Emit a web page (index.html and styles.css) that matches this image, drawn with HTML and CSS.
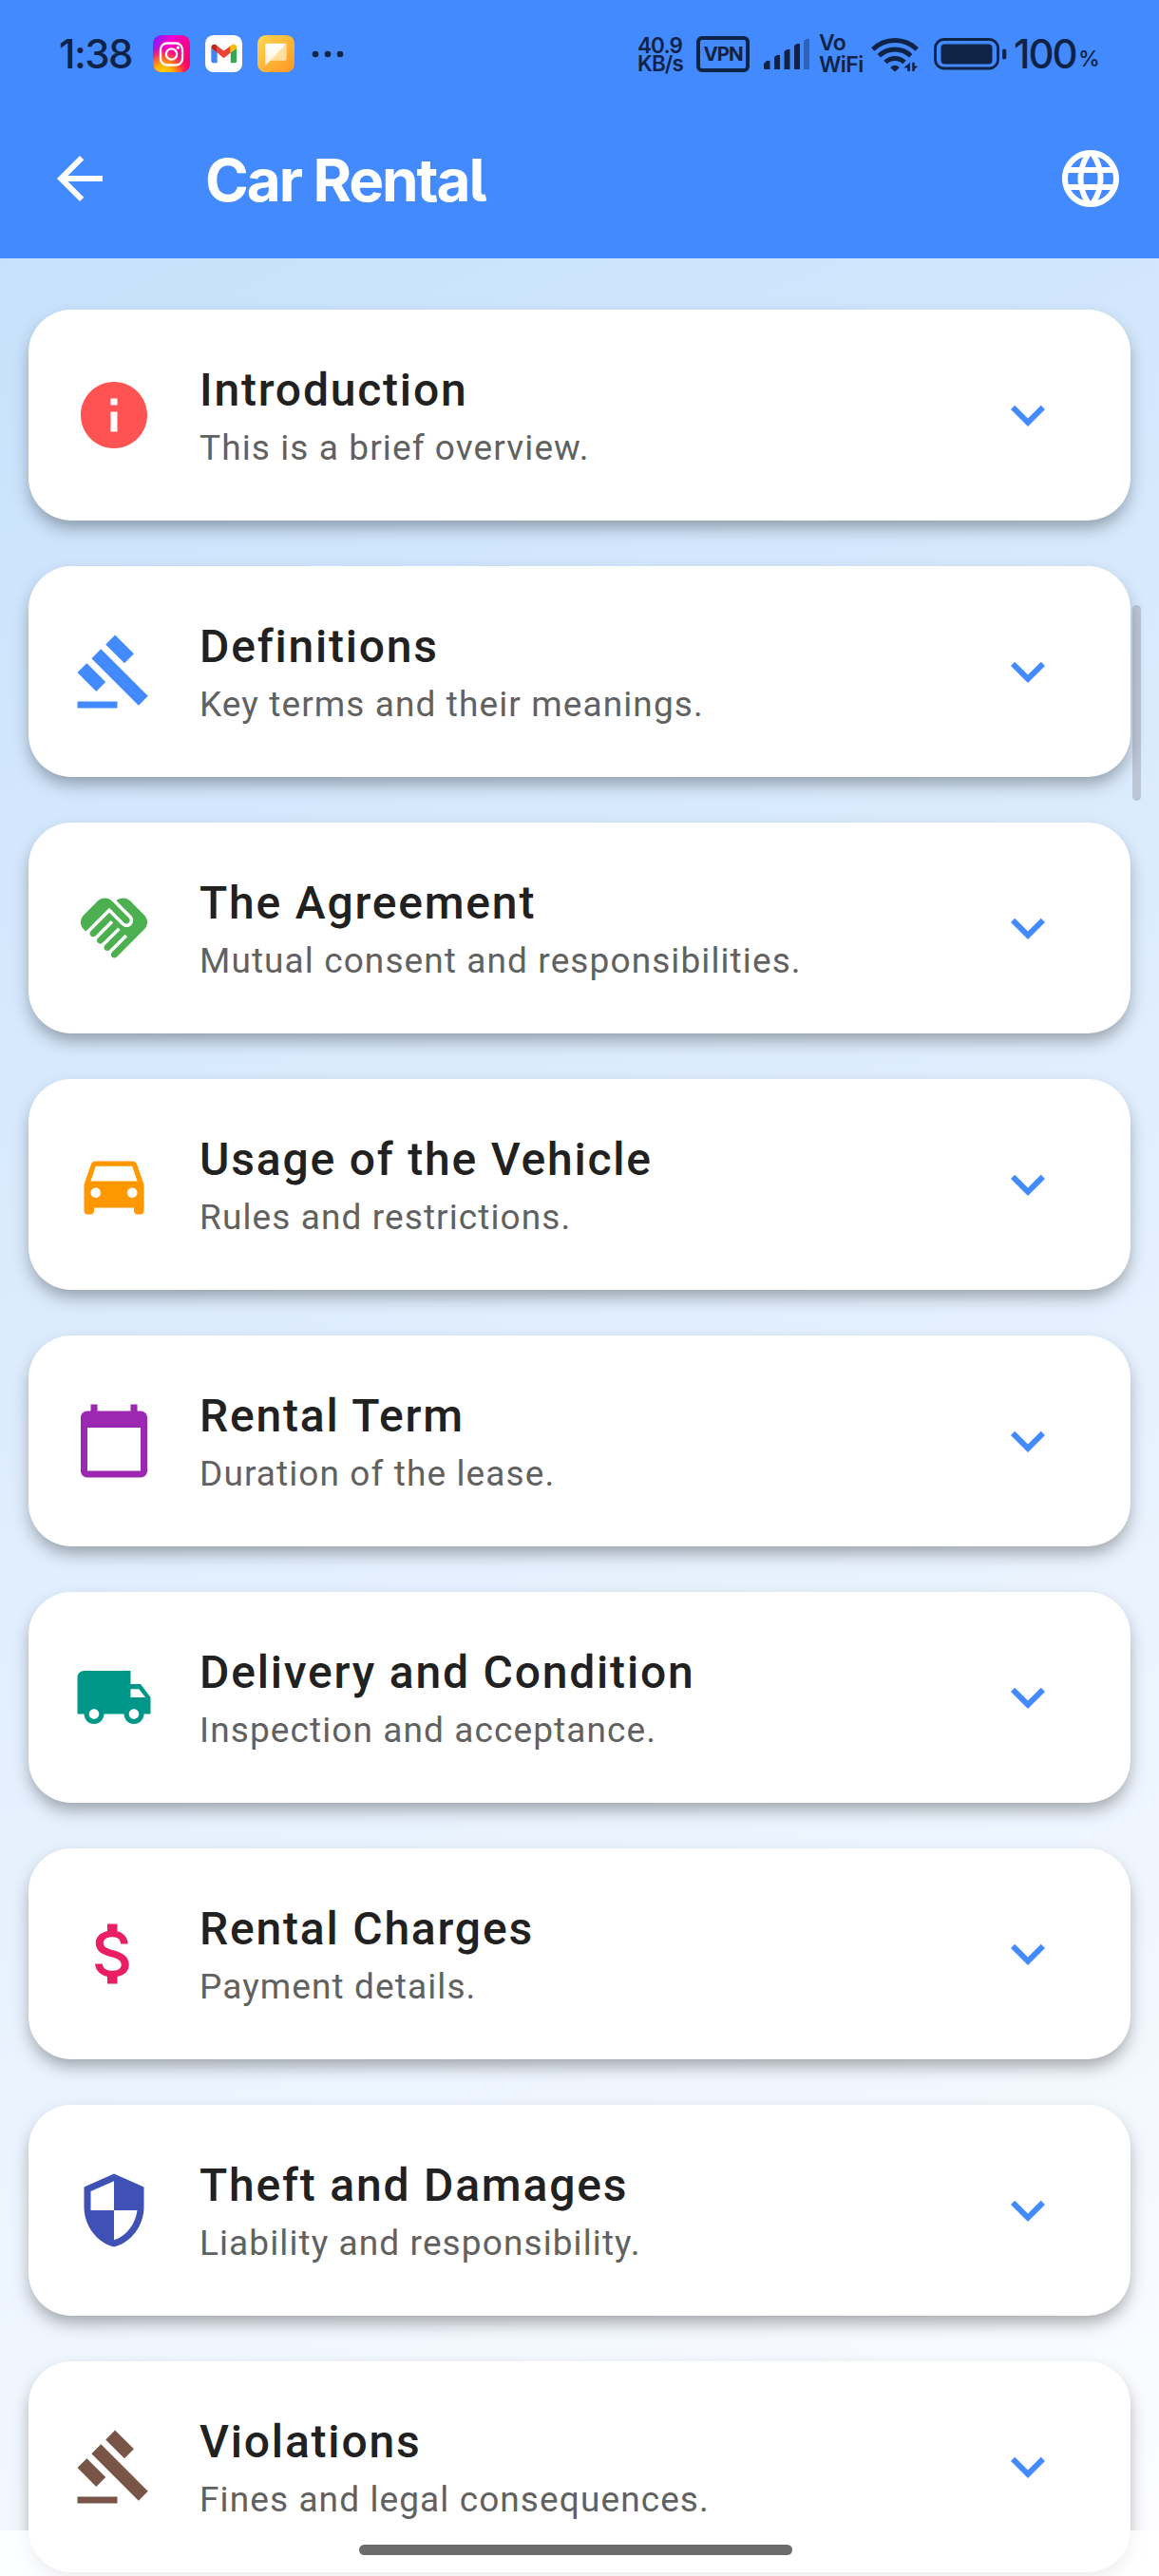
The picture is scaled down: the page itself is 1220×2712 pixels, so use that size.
FILE: index.html
```html
<!DOCTYPE html>
<html lang="en">
<head>
<meta charset="utf-8">
<title>Car Rental</title>
<link rel="stylesheet" href="styles.css">
</head>
<body>
<svg class="defs" width="0" height="0" aria-hidden="true">
  <symbol id="chevron" viewBox="0 0 24 24"><path d="M16.59 8.59 12 13.17 7.41 8.59 6 10l6 6 6-6z"/></symbol>
  <symbol id="gavel" viewBox="0 0 24 24"><path d="M1 21h12v2H1zM5.245 8.07l2.83-2.827 14.14 14.142-2.828 2.828zM12.317 1l5.657 5.656-2.83 2.83-5.654-5.66zM3.825 9.485l5.657 5.657-2.828 2.828-5.657-5.657z"/></symbol>
</svg>
<div class="screen">
  <header class="app-header">
    <div class="status-bar">
      <span class="clock">1:38</span>
      <svg class="app-badge" viewBox="0 0 40 40">
        <defs>
          <linearGradient id="ig" x1="0" y1="0" x2="1" y2="0.6"><stop offset="0" stop-color="#6a22ff"/><stop offset=".4" stop-color="#f400d0"/><stop offset="1" stop-color="#ff0069"/></linearGradient>
          <radialGradient id="igy" cx=".28" cy="1.05" r=".75"><stop offset="0" stop-color="#ffd600"/><stop offset=".35" stop-color="#ffb000"/><stop offset=".65" stop-color="#ff5a2a" stop-opacity=".85"/><stop offset="1" stop-color="#ff0069" stop-opacity="0"/></radialGradient>
          <linearGradient id="nt" x1="0" y1="0" x2="1" y2="1"><stop offset="0" stop-color="#fbd94e"/><stop offset="1" stop-color="#ff9424"/></linearGradient>
          <linearGradient id="nw" x1="0" y1="0" x2="0" y2="1"><stop offset="0" stop-color="#fff"/><stop offset="1" stop-color="#fff2d8"/></linearGradient>
        </defs>
        <rect width="40" height="40" rx="9" fill="url(#ig)"/>
        <rect width="40" height="40" rx="9" fill="url(#igy)"/>
        <g fill="none" stroke="#fff" stroke-width="2.4"><rect x="8.2" y="8.7" width="23.6" height="23.6" rx="7"/><circle cx="20" cy="20.5" r="5.8"/></g>
        <circle cx="27" cy="13.6" r="1.7" fill="#fff"/>
      </svg>
      <svg class="app-badge" viewBox="0 0 40 40">
        <rect width="40" height="40" rx="9" fill="#fff"/>
        <path d="M6.500 14v14c0 1.300.9 2 2 2h4.500V18.500z" fill="#4285f4"/>
        <path d="M27.500 18.500V30H32c1.100 0 2-.7 2-2V14z" fill="#34a853"/>
        <path d="M13 19V11.500l7 5.500 7.500-5.500V19L20 24.800z" fill="#ea4335"/>
        <path d="M6.500 13.500c0-3.200 3-4.200 5.200-3l1.300 1V19l-6.500-5z" fill="#c5221f"/>
        <path d="M34 13.500c0-3.200-3-4.200-5.200-3l-1.800 1V19l7-5z" fill="#fbbc04"/>
      </svg>
      <svg class="app-badge" viewBox="0 0 40 40">
        <rect width="40" height="40" rx="9" fill="url(#nt)"/>
        <path d="M8.500 27.500h21a2 2 0 0 0 2-2V10z" fill="#ffdf9f"/>
        <path d="M8.500 33V11a2 2 0 0 1 2-2h21z" fill="url(#nw)"/>
      </svg>
      <svg class="more" viewBox="0 0 34 8"><circle cx="4" cy="4" r="3.300"/><circle cx="17" cy="4" r="3.300"/><circle cx="30" cy="4" r="3.300"/></svg>
      <div class="net-speed">40.9<br>KB/s</div>
      <span class="vpn">VPN</span>
      <svg class="signal" viewBox="0 0 50 32">
        <path d="M1 31v-5l3-3h3.500v9H2zM12 32V19l3-2h3v15zM22.500 32V13l3-2h3v21zM33 32V7l3-2h3v27z"/>
        <path class="dim" d="M43 32V2l3-2h3v32z"/>
      </svg>
      <div class="vowifi">Vo<br>WiFi</div>
      <svg class="wifi" viewBox="0 0 50 38">
        <g fill="none" stroke="#0f2347" stroke-width="5"><path d="M1.800 14a33 33 0 0 1 46.400 0"/><path d="M8.300 20.800a24 24 0 0 1 33.400 0"/><path d="M15 27.500a14.500 14.500 0 0 1 20 0"/></g>
        <path d="M25 37.500l-4.600-4a5 4.500 0 0 1 9.200 0z"/>
        <path d="M41 27.800V37h-2.800v-3.500h-4zM43.200 37V27.800h2.600v3.700l3.600.5-3.600 2.500V37z"/>
      </svg>
      <svg class="battery" viewBox="0 0 77 34">
        <rect x="1.500" y="1.500" width="66" height="30.500" rx="9" fill="none" stroke="#0f2347" stroke-width="2.800"/>
        <rect x="7.500" y="6.500" width="54" height="21" rx="4"/>
        <rect x="72" y="11.500" width="4.300" height="11" rx="2.100"/>
      </svg>
      <span class="charge">100</span><span class="percent">%</span>
    </div>
    <div class="toolbar">
      <svg class="tool-icon" viewBox="0 0 24 24"><path d="M20 11H7.830l5.590-5.590L12 4l-8 8 8 8 1.410-1.410L7.830 13H20v-2z"/></svg>
      <h1 class="title">Car Rental</h1>
      <svg class="tool-icon" viewBox="0 0 24 24"><path d="M11.990 2C6.470 2 2 6.480 2 12s4.470 10 9.990 10C17.520 22 22 17.520 22 12S17.520 2 11.990 2zm6.930 6h-2.950c-.32-1.250-.78-2.450-1.380-3.560 1.840.63 3.370 1.910 4.330 3.560zM12 4.040c.83 1.200 1.480 2.530 1.910 3.960h-3.820c.43-1.430 1.080-2.760 1.910-3.960zM4.260 14C4.100 13.360 4 12.690 4 12s.1-1.360.26-2h3.380c-.08.66-.14 1.320-.14 2 0 .68.06 1.340.14 2H4.260zm.82 2h2.950c.32 1.250.78 2.450 1.380 3.560-1.840-.63-3.370-1.900-4.330-3.560zm2.950-8H5.080c.96-1.660 2.490-2.930 4.330-3.560C8.810 5.550 8.350 6.750 8.030 8zM12 19.960c-.83-1.200-1.480-2.530-1.910-3.960h3.820c-.43 1.430-1.080 2.760-1.910 3.960zM14.340 14H9.660c-.09-.66-.16-1.320-.16-2 0-.68.07-1.350.16-2h4.680c.09.650.16 1.320.16 2 0 .68-.07 1.340-.16 2zm.25 5.560c.6-1.110 1.060-2.310 1.380-3.560h2.950c-.96 1.650-2.490 2.930-4.330 3.560zM16.360 14c.08-.66.14-1.320.14-2 0-.68-.06-1.340-.14-2h3.380c.16.640.26 1.310.26 2s-.1 1.360-.26 2h-3.380z"/></svg>
    </div>
  </header>

  <main class="list">
    <section class="card">
      <svg class="icon red" viewBox="0 0 24 24"><path d="M12 2C6.480 2 2 6.480 2 12s4.480 10 10 10 10-4.480 10-10S17.520 2 12 2zm1 15h-2v-6h2v6zm0-8h-2V7h2v2z"/></svg>
      <div class="text"><h2>Introduction</h2><p>This is a brief overview.</p></div>
      <svg class="expand"><use href="#chevron"/></svg>
    </section>
    <section class="card">
      <svg class="icon blue"><use href="#gavel"/></svg>
      <div class="text"><h2>Definitions</h2><p>Key terms and their meanings.</p></div>
      <svg class="expand"><use href="#chevron"/></svg>
    </section>
    <section class="card">
      <svg class="icon green" viewBox="0 0 24 24"><path d="M16.480,10.410c-0.390,0.390-1.040,0.390-1.430,0l-4.470-4.460l-7.050,7.040l-0.660-0.630c-1.170-1.170-1.170-3.070,0-4.240l4.240-4.240c1.170-1.170,3.070-1.170,4.240,0L16.480,9C16.870,9.390,16.870,10.020,16.480,10.410z M17.180,8.290c0.780,0.780,0.780,2.050,0,2.830c-1.270,1.270-2.610,0.220-2.830,0l-3.760-3.760l-5.570,5.570c-0.390,0.390-0.390,1.020,0,1.410c0.390,0.390,1.020,0.390,1.420,0l4.620-4.620l0.710,0.710l-4.620,4.620c-0.390,0.390-0.390,1.020,0,1.410c0.390,0.390,1.020,0.390,1.420,0l4.620-4.620l0.710,0.710l-4.620,4.620c-0.390,0.390-0.390,1.020,0,1.410c0.390,0.390,1.020,0.390,1.410,0l4.620-4.620l0.710,0.710l-4.620,4.620c-0.390,0.390-0.390,1.020,0,1.410c0.390,0.390,1.020,0.390,1.410,0l8.320-8.340c1.170-1.170,1.170-3.070,0-4.240l-4.240-4.240c-1.150-1.150-3.010-1.170-4.180-0.060L17.180,8.290z"/></svg>
      <div class="text"><h2>The Agreement</h2><p>Mutual consent and responsibilities.</p></div>
      <svg class="expand"><use href="#chevron"/></svg>
    </section>
    <section class="card">
      <svg class="icon orange" viewBox="0 0 24 24"><path d="M18.920 6.010C18.720 5.420 18.160 5 17.500 5h-11c-.66 0-1.210.42-1.420 1.010L3 12v8c0 .55.45 1 1 1h1c.55 0 1-.45 1-1v-1h12v1c0 .55.45 1 1 1h1c.55 0 1-.45 1-1v-8l-2.080-5.990zM6.500 16c-.83 0-1.500-.67-1.500-1.500S5.670 13 6.500 13s1.500.67 1.500 1.500S7.330 16 6.500 16zm11 0c-.83 0-1.500-.67-1.500-1.500s.67-1.500 1.500-1.500 1.500.67 1.500 1.500-.67 1.500-1.500 1.500zM5 11l1.500-4.500h11L19 11H5z"/></svg>
      <div class="text"><h2>Usage of the Vehicle</h2><p>Rules and restrictions.</p></div>
      <svg class="expand"><use href="#chevron"/></svg>
    </section>
    <section class="card">
      <svg class="icon purple" viewBox="0 0 24 24"><path d="M20 3h-1V1h-2v2H7V1H5v2H4c-1.100 0-2 .9-2 2v16c0 1.100.9 2 2 2h16c1.100 0 2-.9 2-2V5c0-1.100-.9-2-2-2zm0 18H4V8h16v13z"/></svg>
      <div class="text"><h2>Rental Term</h2><p>Duration of the lease.</p></div>
      <svg class="expand"><use href="#chevron"/></svg>
    </section>
    <section class="card">
      <svg class="icon teal" viewBox="0 0 24 24"><path d="M20 8h-3V4H3c-1.100 0-2 .9-2 2v11h2c0 1.660 1.340 3 3 3s3-1.340 3-3h6c0 1.660 1.340 3 3 3s3-1.340 3-3h2v-5l-3-4zM6 18.500c-.83 0-1.500-.67-1.500-1.500s.67-1.500 1.500-1.500 1.500.67 1.500 1.500-.67 1.500-1.500 1.500zm13.500-9l1.960 2.500H17V9.500h2.500zm-1.500 9c-.83 0-1.500-.67-1.500-1.500s.67-1.500 1.500-1.500 1.500.67 1.500 1.500-.67 1.500-1.500 1.500z"/></svg>
      <div class="text"><h2>Delivery and Condition</h2><p>Inspection and acceptance.</p></div>
      <svg class="expand"><use href="#chevron"/></svg>
    </section>
    <section class="card">
      <svg class="icon pink" viewBox="0 0 24 24"><path d="M11.800 10.900c-2.270-.59-3-1.200-3-2.150 0-1.090 1.010-1.850 2.700-1.850 1.780 0 2.440.85 2.500 2.100h2.210c-.07-1.720-1.120-3.300-3.210-3.810V3h-3v2.160c-1.940.42-3.500 1.680-3.500 3.610 0 2.310 1.910 3.460 4.700 4.130 2.500.6 3 1.480 3 2.410 0 .69-.49 1.790-2.700 1.790-2.060 0-2.870-.92-2.980-2.100h-2.200c.12 2.190 1.760 3.420 3.680 3.830V21h3v-2.150c1.950-.37 3.500-1.500 3.500-3.550 0-2.840-2.430-3.810-4.700-4.400z"/></svg>
      <div class="text"><h2>Rental Charges</h2><p>Payment details.</p></div>
      <svg class="expand"><use href="#chevron"/></svg>
    </section>
    <section class="card">
      <svg class="icon indigo" viewBox="0 0 24 24"><path d="M12 1L3 5v6c0 5.550 3.840 10.740 9 12 5.160-1.260 9-6.450 9-12V5l-9-4zm0 10.990h7c-.53 4.120-3.280 7.790-7 8.940V12H5V6.300l7-3.110v8.800z"/></svg>
      <div class="text"><h2>Theft and Damages</h2><p>Liability and responsibility.</p></div>
      <svg class="expand"><use href="#chevron"/></svg>
    </section>
    <section class="card">
      <svg class="icon brown"><use href="#gavel"/></svg>
      <div class="text"><h2>Violations</h2><p>Fines and legal consequences.</p></div>
      <svg class="expand"><use href="#chevron"/></svg>
    </section>
  </main>

  <div class="scrollbar"></div>
  <div class="nav-bar"><div class="handle"></div></div>
</div>
</body>
</html>
```

FILE: styles.css
```css
* { box-sizing: border-box; }

body { margin: 0; }

.defs { position: absolute; }

.screen {
  position: relative;
  width: 1220px;
  height: 2712px;
  overflow: hidden;
  font-family: Roboto, "Noto Sans", sans-serif;
  background: linear-gradient(155.8deg, #c7e1fc 8%, #fdfdff 100%);
}

/* Header */
.app-header {
  height: 272px;
  background: #448aff;
}

.status-bar {
  display: flex;
  align-items: center;
  height: 104px;
  padding: 9px 62px 0;
  color: #0f2347;
  fill: #0f2347;
  font-family: Inter, Roboto, sans-serif;
}

.status-bar > * { flex: none; }

.clock {
  width: 99px;
  font-size: 42px;
  font-weight: 500;
  letter-spacing: -1.5px;
}

.app-badge {
  width: 39px;
  height: 39px;
  margin-right: 16px;
}

.more { width: 34px; height: 8px; margin-left: 2px; }

.net-speed,
.vowifi {
  font-weight: 600;
  white-space: nowrap;
}

.net-speed {
  width: 50px;
  margin-left: 309px;
  font-size: 22.5px;
  line-height: 19px;
  letter-spacing: -0.9px;
}

.vpn {
  display: flex;
  align-items: center;
  justify-content: center;
  width: 56px;
  height: 38px;
  margin-left: 12px;
  border: 4px solid #0f2347;
  border-radius: 6px;
  font-size: 20.5px;
  font-weight: 700;
  letter-spacing: -1px;
}

.signal { width: 50px; height: 32px; margin-left: 14px; }
.dim { fill: #2e62b8; }

.vowifi {
  width: 46px;
  margin-left: 9px;
  font-size: 23px;
  line-height: 23px;
  letter-spacing: -0.6px;
}

.wifi { width: 50px; height: 38px; margin-left: 9px; }
.battery { width: 77px; height: 34px; margin-left: 16px; }

.charge {
  width: 67px;
  margin-left: 7px;
  font-size: 42px;
  font-weight: 500;
  letter-spacing: -2px;
}

.percent {
  margin-top: 11px;
  margin-left: 1px;
  font-size: 23px;
  font-weight: 500;
}

.toolbar {
  display: flex;
  align-items: center;
  height: 168px;
  padding: 0 36px 0 48px;
  fill: #fff;
}

.tool-icon { flex: none; width: 72px; height: 72px; }

.title {
  flex: 1;
  margin: 3px 0 0 96px;
  color: #fff;
  font: 650 62px/80px Inter, Roboto, sans-serif;
  font-feature-settings: "cv05";
  letter-spacing: -2.1px;
  white-space: nowrap;
}

/* Section cards */
.list {
  display: flex;
  flex-direction: column;
  gap: 48px;
  padding: 54px 30px 0;
}

.card {
  display: flex;
  flex: none;
  align-items: center;
  height: 222px;
  padding: 0 72px 0 48px;
  border-radius: 45px;
  background: #fff;
  box-shadow: 0 9px 18px -2px rgba(0, 0, 0, 0.34);
}

.icon { flex: none; width: 84px; height: 84px; fill: currentColor; }
.expand { flex: none; width: 72px; height: 72px; fill: #448aff; }

.text {
  flex: 1;
  margin: 3px 0 0 48px;
  white-space: nowrap;
}

.text h2 {
  margin: 0;
  color: #212121;
  font-size: 48px;
  font-weight: 500;
  line-height: 66px;
  letter-spacing: 1.8px;
}

.text p {
  margin: 0;
  color: #616161;
  font-size: 37px;
  line-height: 56px;
  letter-spacing: 1.1px;
}

.red { color: #ff5252; }
.blue { color: #448aff; }
.green { color: #4caf50; }
.orange { color: #ff9800; }
.purple { color: #9c27b0; }
.teal { color: #009688; }
.pink { color: #e91e63; }
.indigo { color: #3f51b5; }
.brown { color: #795548; }

/* Overlays above the scrolling list */
.scrollbar {
  position: absolute;
  top: 637px;
  right: 19px;
  width: 9px;
  height: 206px;
  border-radius: 5px;
  background: rgba(90, 80, 90, 0.24);
}

.nav-bar {
  position: absolute;
  right: 0;
  bottom: 0;
  left: 0;
  display: flex;
  justify-content: center;
  height: 48px;
  padding-top: 15px;
  background: rgba(255, 255, 255, 0.8);
}

.handle {
  width: 456px;
  height: 11px;
  margin-right: 8px;
  border-radius: 6px;
  background: #6b6b6b;
}
```
